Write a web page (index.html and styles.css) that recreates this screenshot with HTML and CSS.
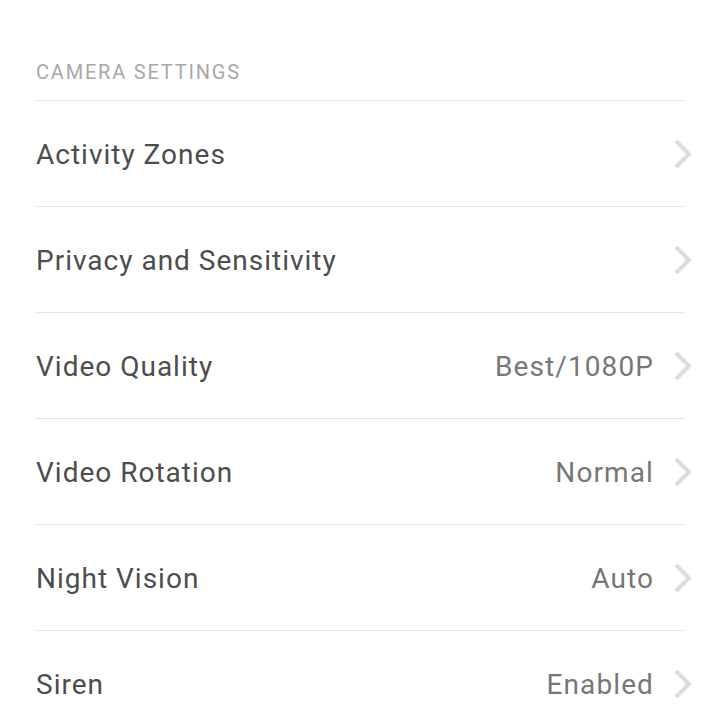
FILE: index.html
```html
<!DOCTYPE html>
<html lang="en">
<head>
  <meta charset="UTF-8">
  <meta name="viewport" content="width=device-width, initial-scale=1.0">
  <title>Camera Settings</title>
  <link rel="stylesheet" href="styles.css">
</head>
<body>
  <div class="settings">
    <div class="sectionTitle">CAMERA SETTINGS</div>
    <ul class="list">
      <li class="row"><span class="label">Activity Zones</span><span class="value"></span><svg class="chev" viewBox="0 0 20 32"><path d="M3 3 L16 16 L3 29"/></svg></li>
      <li class="row"><span class="label">Privacy and Sensitivity</span><span class="value"></span><svg class="chev" viewBox="0 0 20 32"><path d="M3 3 L16 16 L3 29"/></svg></li>
      <li class="row"><span class="label">Video Quality</span><span class="value">Best/1080P</span><svg class="chev" viewBox="0 0 20 32"><path d="M3 3 L16 16 L3 29"/></svg></li>
      <li class="row"><span class="label">Video Rotation</span><span class="value">Normal</span><svg class="chev" viewBox="0 0 20 32"><path d="M3 3 L16 16 L3 29"/></svg></li>
      <li class="row"><span class="label">Night Vision</span><span class="value">Auto</span><svg class="chev" viewBox="0 0 20 32"><path d="M3 3 L16 16 L3 29"/></svg></li>
      <li class="row"><span class="label">Siren</span><span class="value">Enabled</span><svg class="chev" viewBox="0 0 20 32"><path d="M3 3 L16 16 L3 29"/></svg></li>
    </ul>
  </div>
</body>
</html>
```

FILE: styles.css
```css
body { margin: 0; padding: 0; background: #fff; font-family: Roboto, 'Noto Sans', Arial, sans-serif; overflow: hidden; }
.settings { padding: 0 35px; }
.sectionTitle { font-size: 20px; letter-spacing: 1.8px; color: #a8a8a8; height: 101px; box-sizing: border-box; padding-top: 60px; padding-left: 1px; border-bottom: 1px solid #e3e3e3; }
.list { list-style: none; margin: 0; padding: 0; }
.row { height: 105px; border-bottom: 1px solid #e3e3e3; display: flex; align-items: center; padding-left: 1px; }
.label { flex: 1; font-size: 28px; letter-spacing: 1px; color: #4d4d4d; padding-top: 2px; }
.value { font-size: 28px; letter-spacing: 1.1px; color: #777; margin-right: 19px; padding-top: 2px; }
.chev { width: 20px; height: 32px; margin-right: -8px; }
.chev path { fill: none; stroke: #dcdcdc; stroke-width: 4; }
```
